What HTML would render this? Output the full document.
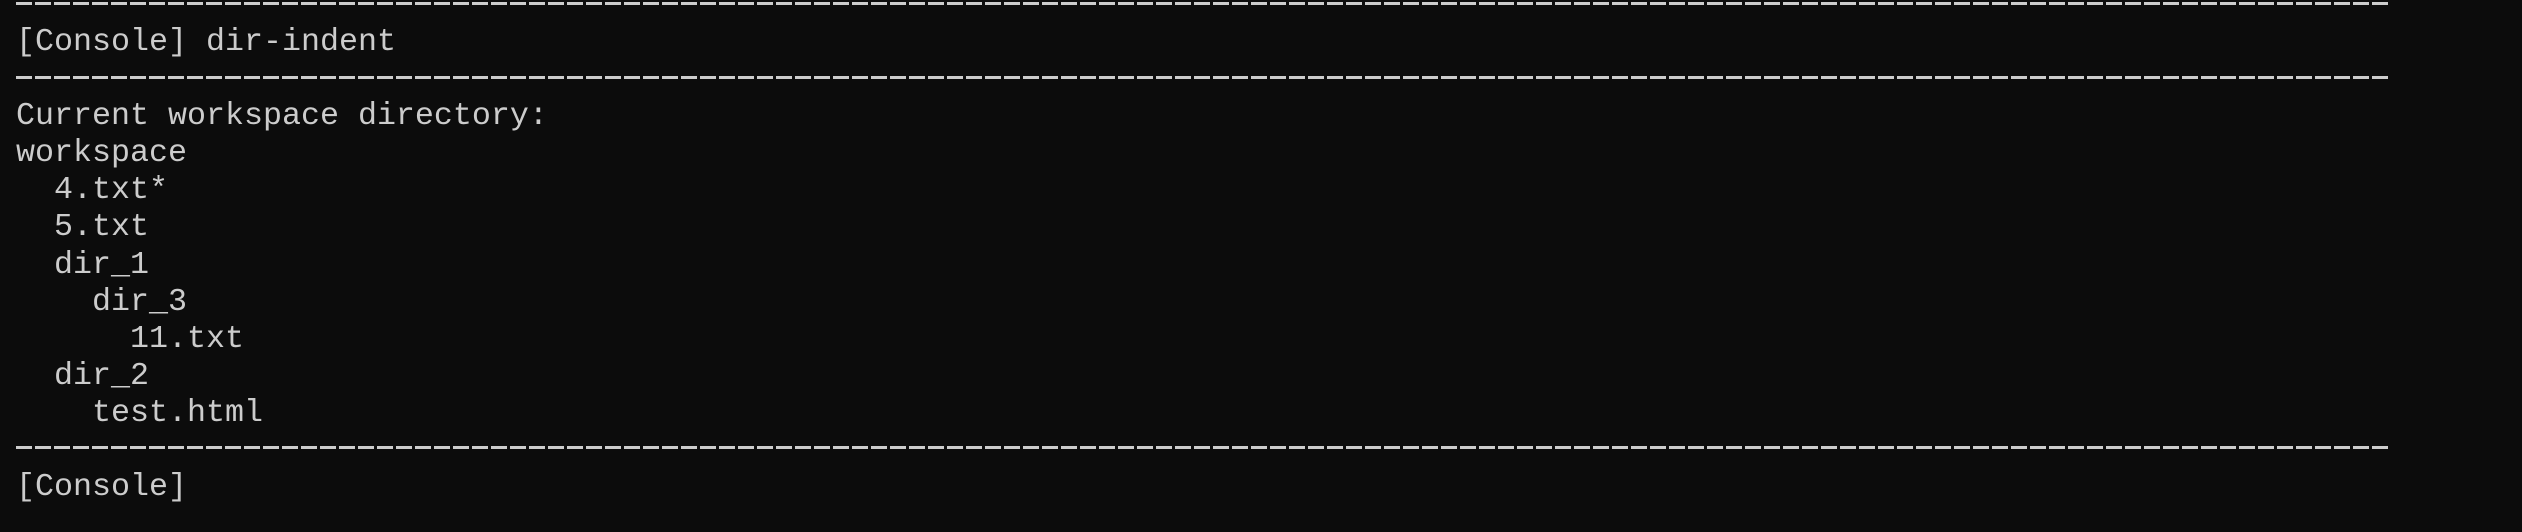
<!DOCTYPE html>
<html><head><meta charset="utf-8"><style>
html,body{margin:0;padding:0;background:#0c0c0c;width:2522px;height:532px;overflow:hidden}
#t{position:absolute;left:16px;top:-19px;font-family:"Liberation Mono",monospace;font-size:31.67px;line-height:37.08px;color:#cccccc;white-space:pre}
.l{height:37.08px;position:relative;top:6px}
.d{height:37.08px;position:relative;width:2375px}
.d::after{content:"";position:absolute;left:0;right:0;top:20.5px;height:3px;background:repeating-linear-gradient(90deg,#cccccc 0 16px,transparent 16px 19px)}
</style></head><body>
<div id="t"><div class="d"></div><div class="l">[Console] dir-indent</div><div class="d"></div><div class="l">Current workspace directory:</div><div class="l">workspace</div><div class="l">  4.txt*</div><div class="l">  5.txt</div><div class="l">  dir_1</div><div class="l">    dir_3</div><div class="l">      11.txt</div><div class="l">  dir_2</div><div class="l">    test.html</div><div class="d"></div><div class="l">[Console]</div></div>
</body></html>
